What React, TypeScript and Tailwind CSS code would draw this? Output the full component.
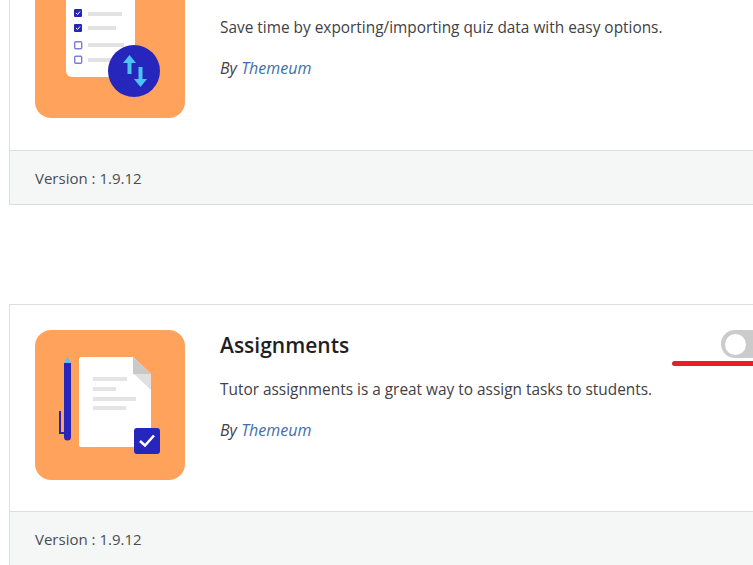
import type { ReactNode } from 'react';

function ExportIcon() {
  return (
    <svg viewBox="0 0 150 150" className="w-[150px] h-[150px] block">
      <rect width="150" height="150" rx="16" fill="#ffa35c" />
      <rect x="31" y="-6" width="69" height="115" rx="6" fill="#ffffff" />
      <rect x="39" y="41" width="8" height="8" rx="1" fill="#2626bd" />
      <rect x="39" y="56" width="8" height="8" rx="1" fill="#2626bd" />
      <rect x="39.7" y="73.7" width="7" height="7" rx="1" fill="#fff" stroke="#7d7dd8" strokeWidth="1.4" />
      <rect x="39.7" y="88.2" width="7" height="7" rx="1" fill="#fff" stroke="#7d7dd8" strokeWidth="1.4" />
      <path d="M41 45l1.5 1.5 2.5-3M41 60l1.5 1.5 2.5-3" fill="none" stroke="#fff" strokeWidth="1" />
      <rect x="53" y="44" width="34" height="4" fill="#e2e2e2" />
      <rect x="53" y="58" width="28" height="4" fill="#e2e2e2" />
      <rect x="53" y="75" width="36" height="4" fill="#e2e2e2" />
      <rect x="53" y="90" width="30" height="4" fill="#e2e2e2" />
      <circle cx="99" cy="103" r="26" fill="#2626bd" />
      <path d="M94.5 87l6.5 8h-4.5v11h-4V95H88z" fill="#4cc3f5" />
      <path d="M105.5 119l6.5-8h-4.5V99h-4v12H99z" fill="#4cc3f5" />
    </svg>
  );
}

function AssignmentIcon() {
  return (
    <svg viewBox="0 0 150 150" className="w-[150px] h-[150px] block">
      <rect width="150" height="150" rx="16" fill="#ffa35c" />
      <path d="M29 33l3.5-6 3.5 6z" fill="#58c4f0" />
      <path d="M29 33h7v74a3.5 3.5 0 0 1-7 0z" fill="#2626bd" />
      <path d="M25 81v22h4" fill="none" stroke="#2626bd" strokeWidth="2" />
      <path d="M46 27h52l18 17v73H46a2 2 0 0 1-2-2V29a2 2 0 0 1 2-2z" fill="#ffffff" />
      <path d="M98 27l18 17H98z" fill="#c9c9c9" />
      <path d="M116 44v16L99 44z" fill="#e0e0e0" />
      <rect x="58" y="47" width="34" height="4" fill="#e4e4e4" />
      <rect x="58" y="57" width="23" height="4" fill="#e4e4e4" />
      <rect x="58" y="67" width="43" height="4" fill="#e4e4e4" />
      <rect x="58" y="76" width="33" height="4" fill="#e4e4e4" />
      <rect x="99" y="98" width="26" height="26" rx="3" fill="#2626bd" />
      <path d="M105 111l5 4.5 9-10" fill="none" stroke="#fff" strokeWidth="2.6" />
    </svg>
  );
}

interface AddonCardProps {
  icon: ReactNode;
  title?: string;
  description: string;
  version: string;
  bodyClass: string;
  toggle?: boolean;
}

function AddonCard({ icon, title, description, version, bodyClass, toggle }: AddonCardProps) {
  return (
    <div className="w-[800px] border border-[#dcdfe0] bg-white">
      <div className={`flex pt-[25px] pl-[25px] ${bodyClass}`}>
        {icon}
        <div className="pl-[35px] flex-1">
          <h3 className="h-[30px] text-[21px] leading-[30px] font-semibold text-[#1f1f27]">{title}</h3>
          <p className="mt-[18px] text-[15.4px] leading-[24px] text-[#3f4147]">{description}</p>
          <p className="mt-[16px] text-[16px] leading-[24px] italic text-[#3f4147]">
            By <span className="text-[#3e6fa8]">Themeum</span>
          </p>
        </div>
        {toggle && (
          <div className="absolute left-[712px] top-[26px] w-[50px] h-[28px] rounded-full bg-[#cbcbcb] flex items-center pl-[4px]">
            <div className="w-[21px] h-[21px] rounded-full bg-white" />
          </div>
        )}
      </div>
      <div className="h-[54px] bg-[#f5f7f7] border-t border-[#dcdfe0] pl-[25px] pt-[2px] flex items-center text-[15px] text-[#4a4c52]">
        Version : {version}
      </div>
    </div>
  );
}

export default function App() {
  return (
    <div className="h-[565px] w-[753px] overflow-hidden bg-white font-['Open_Sans','Noto_Sans',sans-serif]">
      <div className="-mt-[58px] ml-[9px] flex flex-col gap-[99px]">
        <AddonCard
          icon={<ExportIcon />}
          description="Save time by exporting/importing quiz data with easy options."
          version="1.9.12"
          bodyClass="h-[207px]"
        />
        <div className="relative">
          <AddonCard
            icon={<AssignmentIcon />}
            title="Assignments"
            description="Tutor assignments is a great way to assign tasks to students."
            version="1.9.12"
            bodyClass="h-[206px]"
            toggle
          />
          <div className="absolute left-[663px] top-[57px] w-[120px] h-[5px] rounded-full bg-[#e5201f]" />
        </div>
      </div>
    </div>
  );
}
